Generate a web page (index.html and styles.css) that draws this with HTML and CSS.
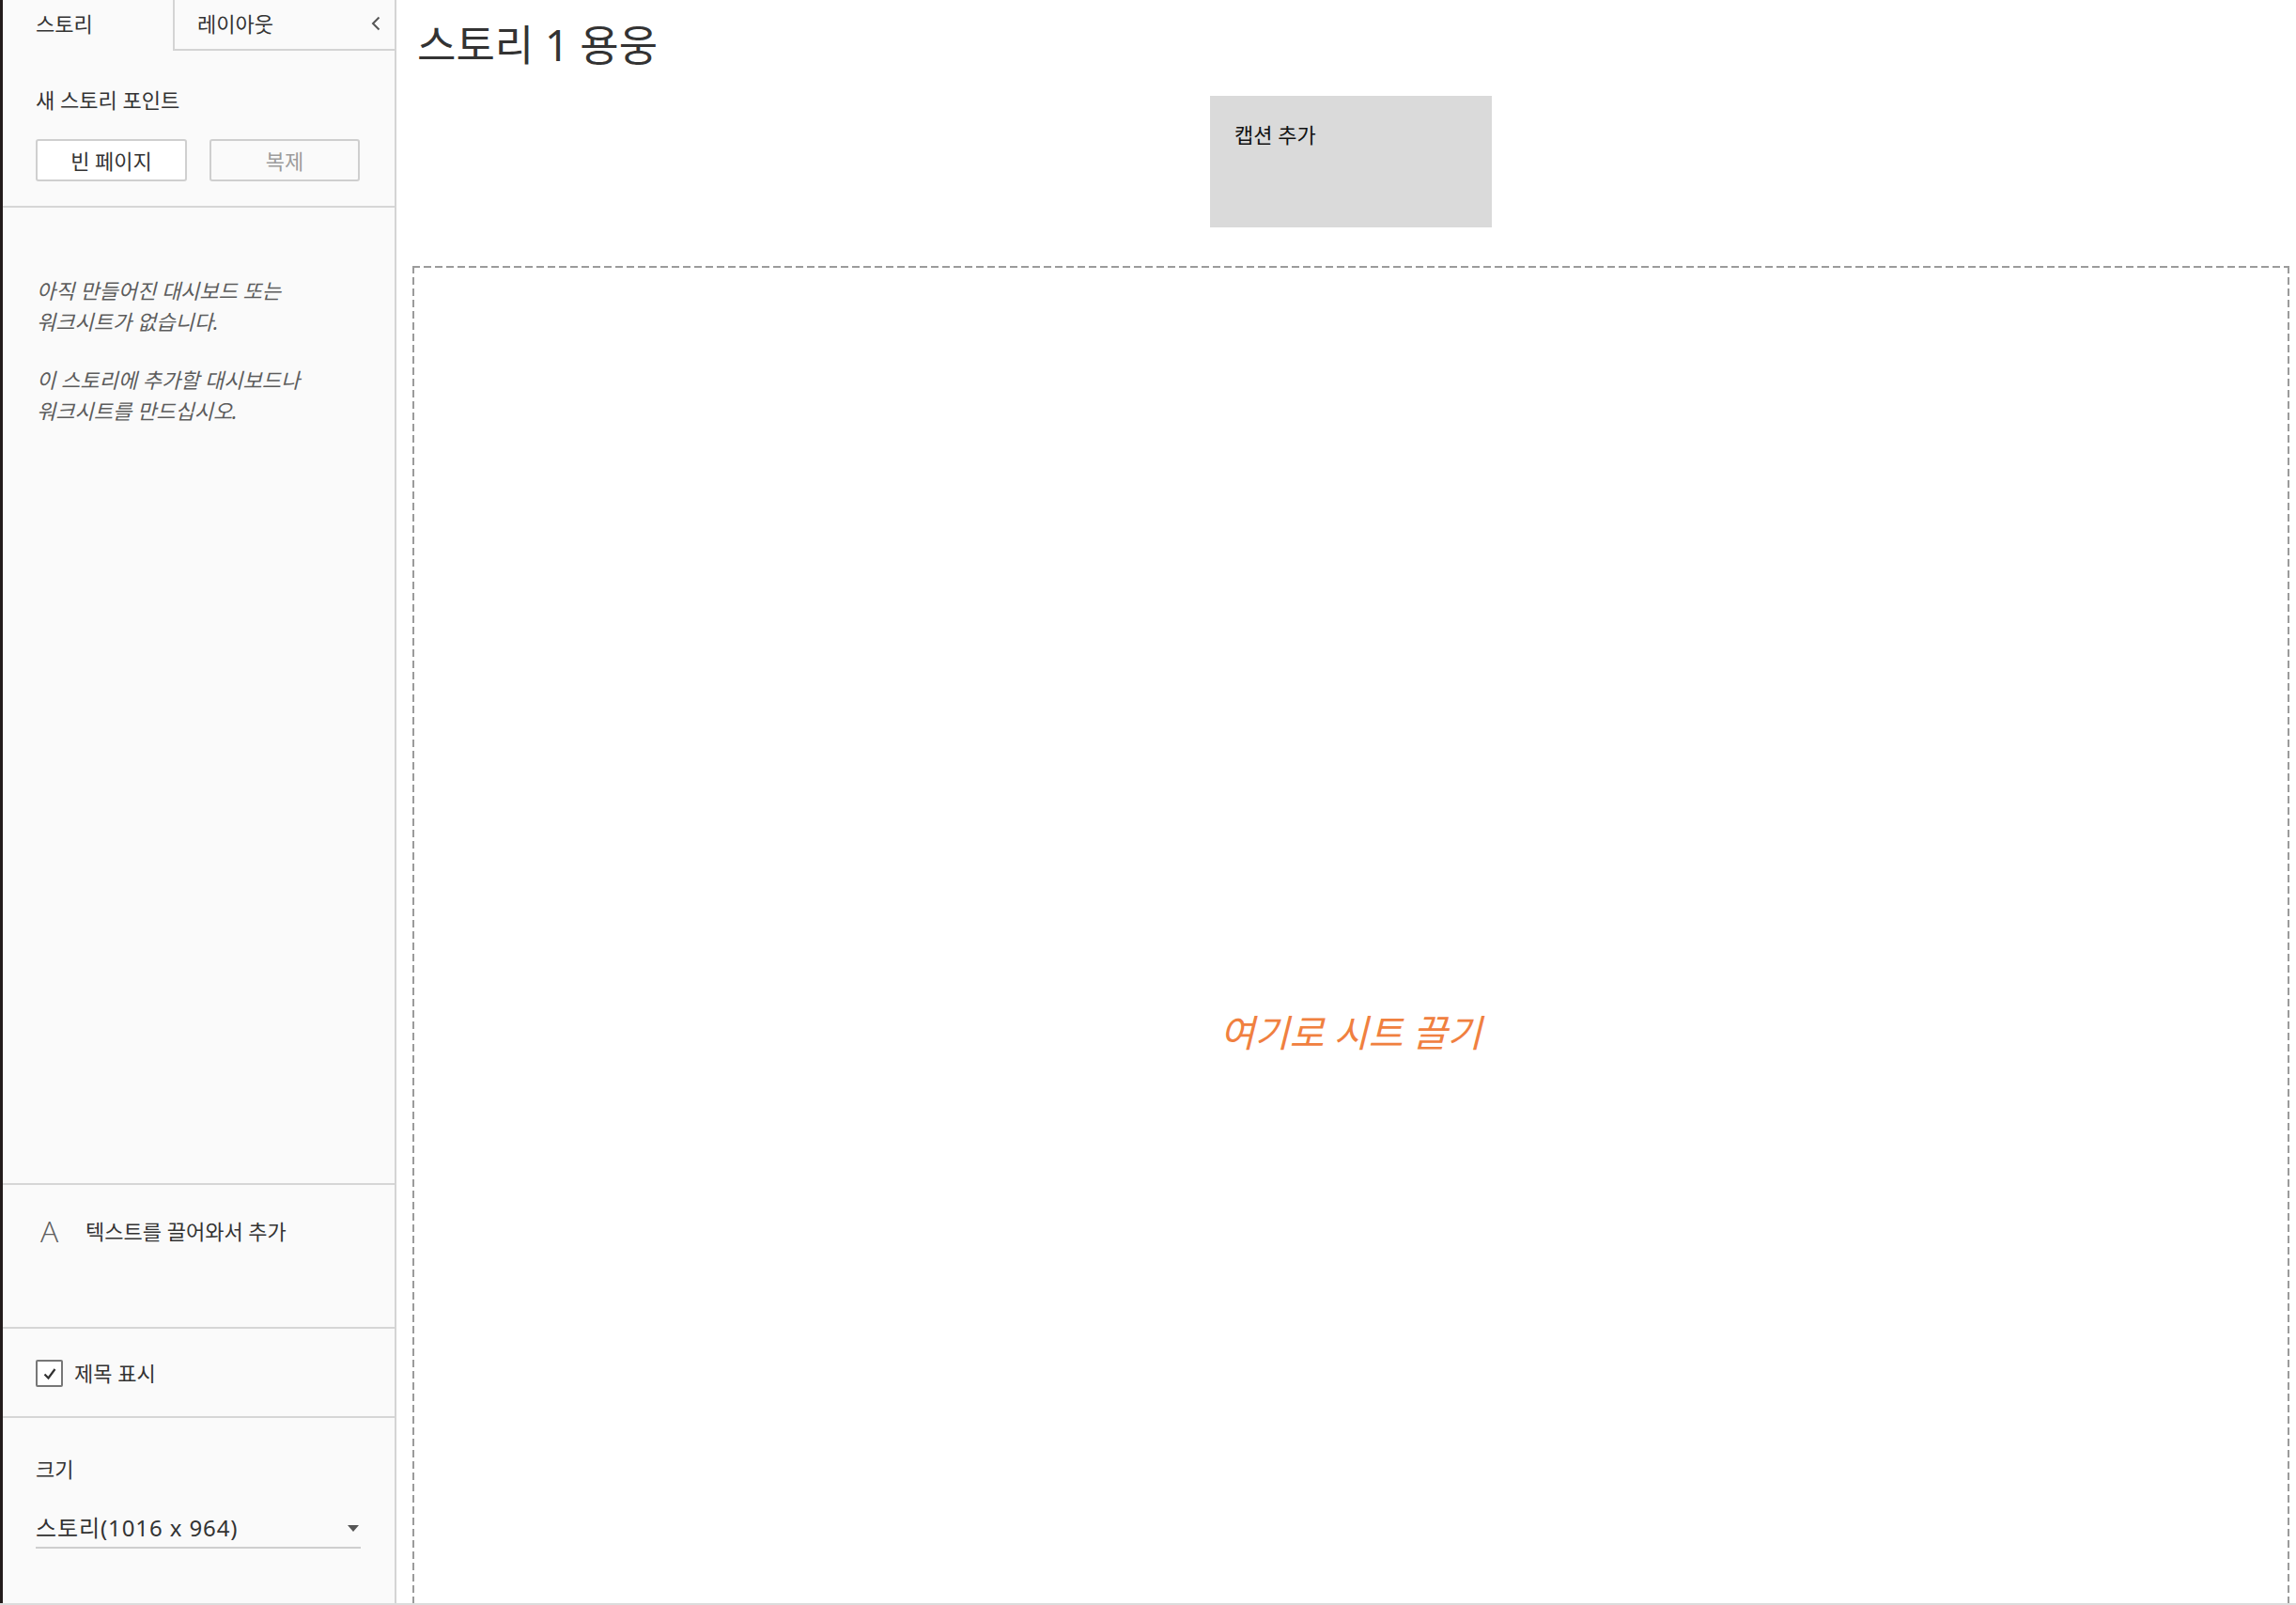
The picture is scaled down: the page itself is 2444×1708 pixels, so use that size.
FILE: index.html
```html
<!DOCTYPE html>
<html lang="ko">
<head>
<meta charset="utf-8">
<title>스토리 1 용웅</title>
<link rel="stylesheet" href="styles.css">
</head>
<body>
<div class="app">
  <div class="edge"></div>
  <aside class="sidebar">
    <div class="tabs">
      <div class="tab tab-active">스토리</div>
      <div class="tab tab-idle">
        <span>레이아웃</span>
        <svg class="chev" width="12" height="16" viewBox="0 0 12 16"><path d="M9.5 1.5 L3 8 L9.5 14.5" fill="none" stroke="#555" stroke-width="2"/></svg>
      </div>
    </div>
    <section class="sec-new">
      <div class="label">새 스토리 포인트</div>
      <div class="btn-row">
        <button class="btn">빈 페이지</button>
        <button class="btn btn-disabled">복제</button>
      </div>
    </section>
    <section class="sec-msg">
      <p>아직 만들어진 대시보드 또는<br>워크시트가 없습니다.</p>
      <p>이 스토리에 추가할 대시보드나<br>워크시트를 만드십시오.</p>
    </section>
    <section class="sec-text">
      <span class="a-icon">A</span>
      <span class="label">텍스트를 끌어와서 추가</span>
    </section>
    <section class="sec-check">
      <span class="checkbox">
        <svg width="20" height="20" viewBox="0 0 20 20"><path d="M4.5 10.5 L8.5 14.5 L15.5 5" fill="none" stroke="#333" stroke-width="2.2"/></svg>
      </span>
      <span class="label">제목 표시</span>
    </section>
    <section class="sec-size">
      <div class="label">크기</div>
      <div class="select">
        <span>스토리(1016 x 964)</span>
        <span class="caret"></span>
      </div>
    </section>
  </aside>
  <main class="main">
    <h1 class="title">스토리 1 용웅</h1>
    <div class="caption-row">
      <div class="caption">캡션 추가</div>
    </div>
    <div class="dropzone">
      <span class="drop-text">여기로 시트 끌기</span>
    </div>
  </main>
</div>
</body>
</html>
```
FILE: styles.css
```css
* { box-sizing: border-box; }
html, body { margin: 0; padding: 0; }
body {
  font-family: "Noto Sans", "Noto Sans CJK KR", sans-serif;
  color: #333;
  background: #fff;
}
.app {
  display: flex;
  height: 1708px;
  overflow: hidden;
  border-bottom: 2px solid #dcdcdc;
}
.edge {
  width: 3px;
  flex: none;
  background: #231c1c;
}
.sidebar {
  width: 419px;
  flex: none;
  background: #fafafa;
  border-right: 2px solid #d4d4d4;
  display: flex;
  flex-direction: column;
  font-size: 22px;
}
.tabs {
  display: flex;
  height: 54px;
  flex: none;
}
.tab {
  line-height: 50px;
  font-size: 22px;
}
.tab-active {
  width: 181px;
  padding-left: 35px;
}
.tab-idle {
  flex: 1;
  border-left: 2px solid #d4d4d4;
  border-bottom: 2px solid #d4d4d4;
  padding-left: 24px;
  padding-right: 14px;
  padding-bottom: 2px;
  display: flex;
  align-items: center;
  justify-content: space-between;
}
.chev { display: block; }
.sec-new {
  padding: 37px 0 26px 35px;
  border-bottom: 2px solid #d6d6d6;
  flex: none;
}
.label { line-height: 30px; font-size: 22px; }
.btn-row {
  display: flex;
  gap: 24px;
  margin-top: 27px;
}
.btn {
  width: 161px;
  height: 45px;
  background: #fff;
  border: 2px solid #cfcfcf;
  border-radius: 3px;
  font-family: inherit;
  font-size: 22px;
  color: #333;
  padding: 0 0 2px;
}
.btn-disabled { width: 160px; color: #9c9c9c; background: #fafafa; }
.sec-msg {
  flex: 1;
  padding: 72px 20px 0 36px;
  border-bottom: 2px solid #d6d6d6;
  font-style: italic;
  color: #5c5c5c;
  font-size: 22px;
  line-height: 33px;
}
.sec-msg p { margin: 0 0 29px; }
.sec-text {
  height: 153px;
  flex: none;
  padding: 34px 0 0 38px;
  border-bottom: 2px solid #d6d6d6;
  display: flex;
  align-items: flex-start;
  line-height: 30px;
}
.a-icon {
  font-family: "Open Sans", "DejaVu Sans", sans-serif;
  font-weight: 300;
  font-size: 32px;
  line-height: 30px;
  color: #5f5f5f;
  width: 50px;
  padding-left: 2px;
}
.sec-check {
  height: 95px;
  flex: none;
  padding: 33px 0 0 35px;
  border-bottom: 2px solid #d6d6d6;
  display: flex;
  align-items: flex-start;
}
.checkbox {
  width: 29px;
  height: 29px;
  border: 2px solid #777;
  border-radius: 2px;
  background: #fff;
  display: flex;
  align-items: center;
  justify-content: center;
  margin-right: 12px;
}
.sec-check .label { line-height: 28px; }
.sec-size {
  flex: none;
  height: 197px;
  padding: 39px 36px 0 35px;
}
.select {
  margin-top: 33px;
  display: flex;
  justify-content: space-between;
  align-items: center;
  font-size: 24px;
  letter-spacing: 0.9px;
  line-height: 30px;
  padding-bottom: 5px;
  border-bottom: 2px solid #cfcfcf;
  color: #333;
}
.caret {
  width: 0;
  height: 0;
  border-left: 6px solid transparent;
  border-right: 6px solid transparent;
  border-top: 7px solid #555;
  margin-right: 2px;
}
.main {
  flex: 1;
  display: flex;
  flex-direction: column;
  padding: 20px 7px 0 17px;
  overflow: hidden;
}
.title {
  margin: 0;
  padding-left: 5px;
  font-size: 45px;
  font-weight: 400;
  line-height: 56px;
  color: #333;
}
.caption-row {
  display: flex;
  justify-content: center;
  margin-top: 26px;
}
.caption {
  width: 300px;
  height: 140px;
  background: #dadada;
  padding: 27px 0 0 26px;
  font-size: 22px;
  line-height: 28px;
  color: #111;
}
.dropzone {
  flex: none;
  height: 1628px;
  margin-top: 41px;
  display: flex;
  align-items: center;
  justify-content: center;
  background:
    repeating-linear-gradient(90deg, #9b9b9b 0 8px, transparent 8px 12px) top left / 100% 2px no-repeat,
    repeating-linear-gradient(180deg, #9b9b9b 0 8px, transparent 8px 12px) top left / 2px 100% no-repeat,
    repeating-linear-gradient(180deg, #9b9b9b 0 8px, transparent 8px 12px) top right / 2px 100% no-repeat,
    repeating-linear-gradient(90deg, #9b9b9b 0 8px, transparent 8px 12px) bottom left / 100% 2px no-repeat;
}
.drop-text {
  font-size: 40px;
  font-style: italic;
  color: #f0803f;
}
```
